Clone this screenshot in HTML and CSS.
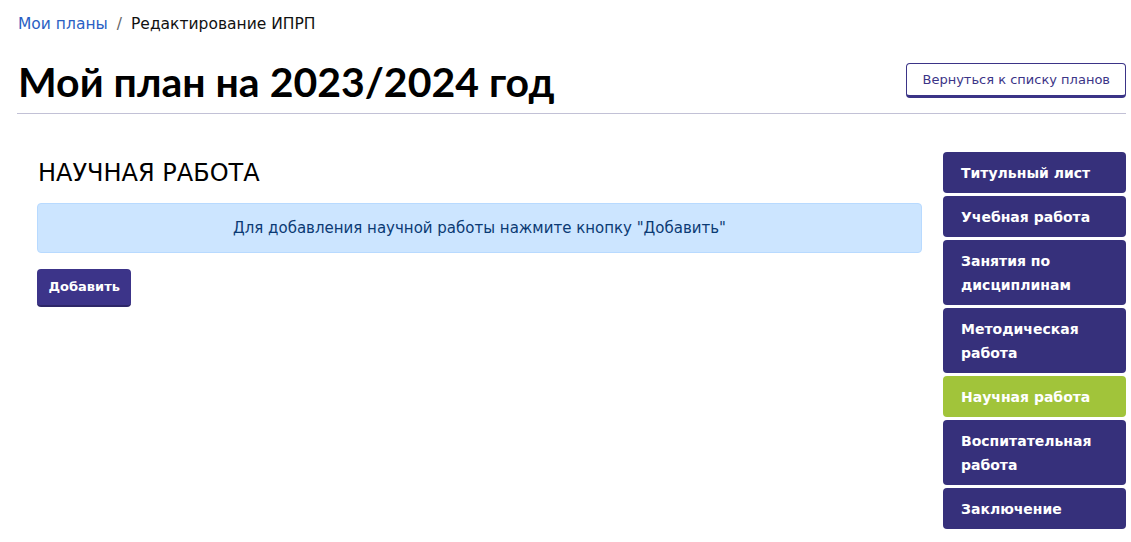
FILE: index.html
```html
<!DOCTYPE html>
<html lang="ru">
<head>
<meta charset="utf-8">
<title>Мой план на 2023/2024 год</title>
<link rel="stylesheet" href="styles.css">
</head>
<body>
<div class="page">
  <nav class="breadcrumb">
    <a class="crumb-link" href="#">Мои планы</a>
    <span class="crumb-sep">/</span>
    <span class="crumb-current">Редактирование ИПРП</span>
  </nav>
  <header class="page-header">
    <h1 class="page-title">Мой план на 2023/2024 год</h1>
    <a class="btn-outline" href="#">Вернуться к списку планов</a>
  </header>
  <div class="layout">
    <main class="content">
      <h2 class="section-title">НАУЧНАЯ РАБОТА</h2>
      <div class="alert">Для добавления научной работы нажмите кнопку "Добавить"</div>
      <button class="btn-primary">Добавить</button>
    </main>
    <aside class="sidebar">
      <a class="side-item" href="#">Титульный лист</a>
      <a class="side-item" href="#">Учебная работа</a>
      <a class="side-item" href="#">Занятия по дисциплинам</a>
      <a class="side-item" href="#">Методическая работа</a>
      <a class="side-item active" href="#">Научная работа</a>
      <a class="side-item" href="#">Воспитательная работа</a>
      <a class="side-item" href="#">Заключение</a>
    </aside>
  </div>
</div>
</body>
</html>
```

FILE: styles.css
```css
* { box-sizing: border-box; }
html, body { margin: 0; background: #fff; }
body {
  font-family: "DejaVu Sans", "Open Sans", "Liberation Sans", sans-serif;
  color: #111;
}
.page {
  padding: 14px 5px 0 17px;
}
.breadcrumb {
  display: flex;
  align-items: center;
  gap: 8px;
  font-size: 15.5px;
  line-height: 20px;
  padding-left: 1px;
}
.crumb-link { color: #2a5fc4; text-decoration: none; }
.crumb-sep { color: #666; padding: 0 1px; }
.crumb-current { color: #111; }

.page-header {
  display: flex;
  justify-content: space-between;
  align-items: center;
  margin-top: 24px;
  padding-bottom: 7px;
  border-bottom: 1px solid #c2c1d6;
}
.page-title {
  margin: 0;
  font-family: "Lato", "Open Sans", sans-serif;
  font-size: 41px;
  line-height: 48px;
  font-weight: 700;
  color: #000;
  padding-left: 1px;
}
.btn-outline {
  display: inline-block;
  border: 1px solid #3b3487;
  border-bottom-width: 3px;
  border-radius: 4px;
  padding: 6px 15px 5px 15.5px;
  font-size: 13px;
  line-height: 20px;
  color: #3b3487;
  text-decoration: none;
  margin-top: -4px;
}

.layout {
  display: flex;
  gap: 21px;
  margin-top: 38px;
}
.content {
  flex: 1;
  padding-left: 20px;
  padding-top: 7px;
}
.section-title {
  margin: 0 0 16px;
  font-size: 24px;
  line-height: 28px;
  font-weight: 400;
  color: #000;
  padding-left: 1px;
}
.alert {
  background: #cce5ff;
  border: 1px solid #b8daff;
  border-radius: 4px;
  color: #0b3a74;
  text-align: center;
  font-size: 15px;
  line-height: 20px;
  padding: 14px 16px 14px;
}
.btn-primary {
  margin-top: 16px;
  background: #3c3489;
  color: #fff;
  border: none;
  border-bottom: 2px solid #2d2768;
  border-radius: 4px;
  font-family: inherit;
  font-size: 13px;
  font-weight: 700;
  line-height: 20px;
  padding: 8px 11.5px 8px;
  cursor: pointer;
}

.sidebar {
  width: 183px;
  flex: none;
  display: flex;
  flex-direction: column;
  gap: 3px;
}
.side-item {
  display: block;
  background: #36307b;
  color: #fff;
  text-decoration: none;
  border-radius: 4px;
  padding: 8.5px 18px;
  font-size: 14px;
  font-weight: 700;
  line-height: 24px;
}
.side-item.active { background: #a1c43a; }
```
